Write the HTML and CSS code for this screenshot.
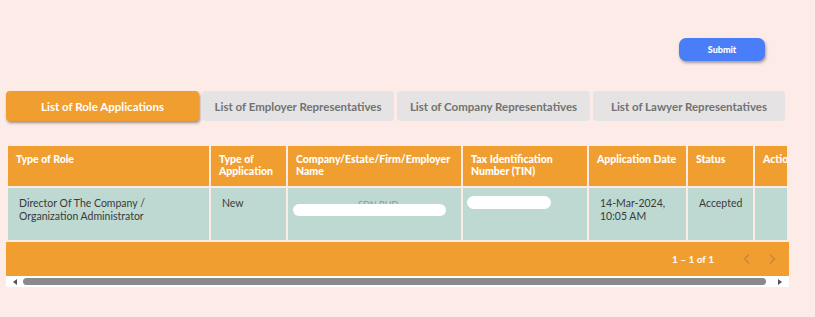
FILE: index.html
```html
<!DOCTYPE html>
<html lang="en">

<head>
  <meta charset="UTF-8" />
  <meta name="viewport" content="width=device-width, initial-scale=1.0" />
  <link rel="stylesheet" href="styles.css">
</head>

<body>
  <div class="top-bar">
    <button class="submit-btn" type="button">Submit</button>
  </div>

  <div class="tabs">
    <div class="tab active">List of Role Applications</div>
    <div class="tab">List of Employer Representatives</div>
    <div class="tab">List of Company Representatives</div>
    <div class="tab">List of Lawyer Representatives</div>
  </div>

  <div class="table-box">
    <div class="table-scroll">
      <table class="roles">
        <thead>
          <tr>
            <th class="c-role">Type of Role</th>
            <th class="c-type">Type of Application</th>
            <th class="c-name">Company/Estate/Firm/Employer Name</th>
            <th class="c-tin">Tax Identification Number (TIN)</th>
            <th class="c-date">Application Date</th>
            <th class="c-status">Status</th>
            <th class="c-action">Action</th>
          </tr>
        </thead>
        <tbody>
          <tr>
            <td>Director Of The Company /<br>Organization Administrator</td>
            <td>New</td>
            <td><span class="hidden-text">SDN BHD</span><span class="blob blob-name"></span></td>
            <td><span class="blob blob-tin"></span></td>
            <td>14-Mar-2024,<br>10:05 AM</td>
            <td>Accepted</td>
            <td></td>
          </tr>
        </tbody>
      </table>
    </div>
    <div class="paginator">
      <span class="range">1 – 1 of 1</span>
      <svg class="chev" width="10" height="12" viewBox="0 0 10 12"><path d="M7 1.5 L2.5 6 L7 10.5" /></svg>
      <svg class="chev" width="10" height="12" viewBox="0 0 10 12"><path d="M3 1.5 L7.5 6 L3 10.5" /></svg>
    </div>
    <div class="scrollbar">
      <span class="arrow left"></span>
      <div class="thumb"></div>
      <span class="arrow right"></span>
    </div>
  </div>
</body>

</html>
```

FILE: styles.css
```css
body {
  margin: 0;
  background-color: #fdebe8;
  font-family: Lato, "Open Sans", sans-serif;
}

.top-bar {
  display: flex;
  justify-content: flex-end;
  padding: 38px 50px 0 0;
  height: 23px;
}

.submit-btn {
  width: 86px;
  height: 23px;
  border: none;
  border-radius: 7px;
  background-color: #4a7ef8;
  color: white;
  font-family: inherit;
  font-size: 9px;
  font-weight: 900;
  box-shadow: 1px 2px 3px rgba(0, 0, 0, 0.35);
}

.tabs {
  display: flex;
  gap: 3px;
  margin: 30px 0 0 6px;
}

.tab {
  width: 193px;
  height: 30px;
  display: flex;
  align-items: center;
  justify-content: center;
  border-radius: 4px;
  background-color: #e5e3e3;
  color: #727272;
  font-size: 11.5px;
  font-weight: bold;
}

.tab:nth-child(2),
.tab:nth-child(4) {
  width: 192px;
}

.tab.active {
  background-color: #f09e2f;
  color: white;
  box-shadow: 1px 2px 3px rgba(0, 0, 0, 0.4);
}

.table-box {
  width: 783px;
  margin: 23px 0 0 6px;
}

.table-scroll {
  width: 781px;
  overflow: hidden;
}

.roles {
  border-spacing: 2px;
  table-layout: fixed;
  width: 820px;
}

.roles th {
  height: 40px;
  box-sizing: border-box;
  padding: 7px 4px 0 8px;
  vertical-align: top;
  text-align: left;
  background-color: #f09e2f;
  color: white;
  font-size: 10.5px;
  font-weight: 900;
  line-height: 12px;
}

.roles td {
  height: 52px;
  box-sizing: border-box;
  padding: 9px 11px 0;
  vertical-align: top;
  background-color: #bed9d2;
  color: #3a3a3a;
  font-size: 10.5px;
  line-height: 13px;
  position: relative;
}

.c-role { width: 201px; }
.c-type { width: 75px; }
.c-name { width: 173px; }
.c-tin { width: 124px; }
.c-date { width: 97px; }
.c-status { width: 65px; }
.c-action { width: 70px; }

.hidden-text {
  position: absolute;
  left: 70px;
  top: 10px;
  color: #8a9a96;
  font-size: 9px;
}

.blob {
  position: absolute;
  background-color: white;
  border-radius: 8px;
}

.blob-name {
  left: 5px;
  top: 16px;
  width: 153px;
  height: 12px;
}

.blob-tin {
  left: 4px;
  top: 8px;
  width: 84px;
  height: 13px;
}

.paginator {
  height: 34px;
  background-color: #f09e2f;
  display: flex;
  align-items: center;
  justify-content: flex-end;
  gap: 15px;
  padding-right: 12px;
  color: white;
  font-size: 10px;
  font-weight: bold;
}

.range {
  margin-right: 13px;
}

.chev path {
  fill: none;
  stroke: #c4873e;
  stroke-width: 1.4;
}

.scrollbar {
  height: 11px;
  background-color: white;
  display: flex;
  align-items: center;
  padding: 0 7px;
  gap: 6px;
}

.thumb {
  flex: 1;
  height: 7px;
  border-radius: 4px;
  background-color: #8a8a8a;
}

.arrow {
  width: 0;
  height: 0;
  border-top: 3px solid transparent;
  border-bottom: 3px solid transparent;
}

.arrow.left {
  border-right: 4px solid #555;
}

.arrow.right {
  border-left: 4px solid #555;
  margin-left: 6px;
}
```
